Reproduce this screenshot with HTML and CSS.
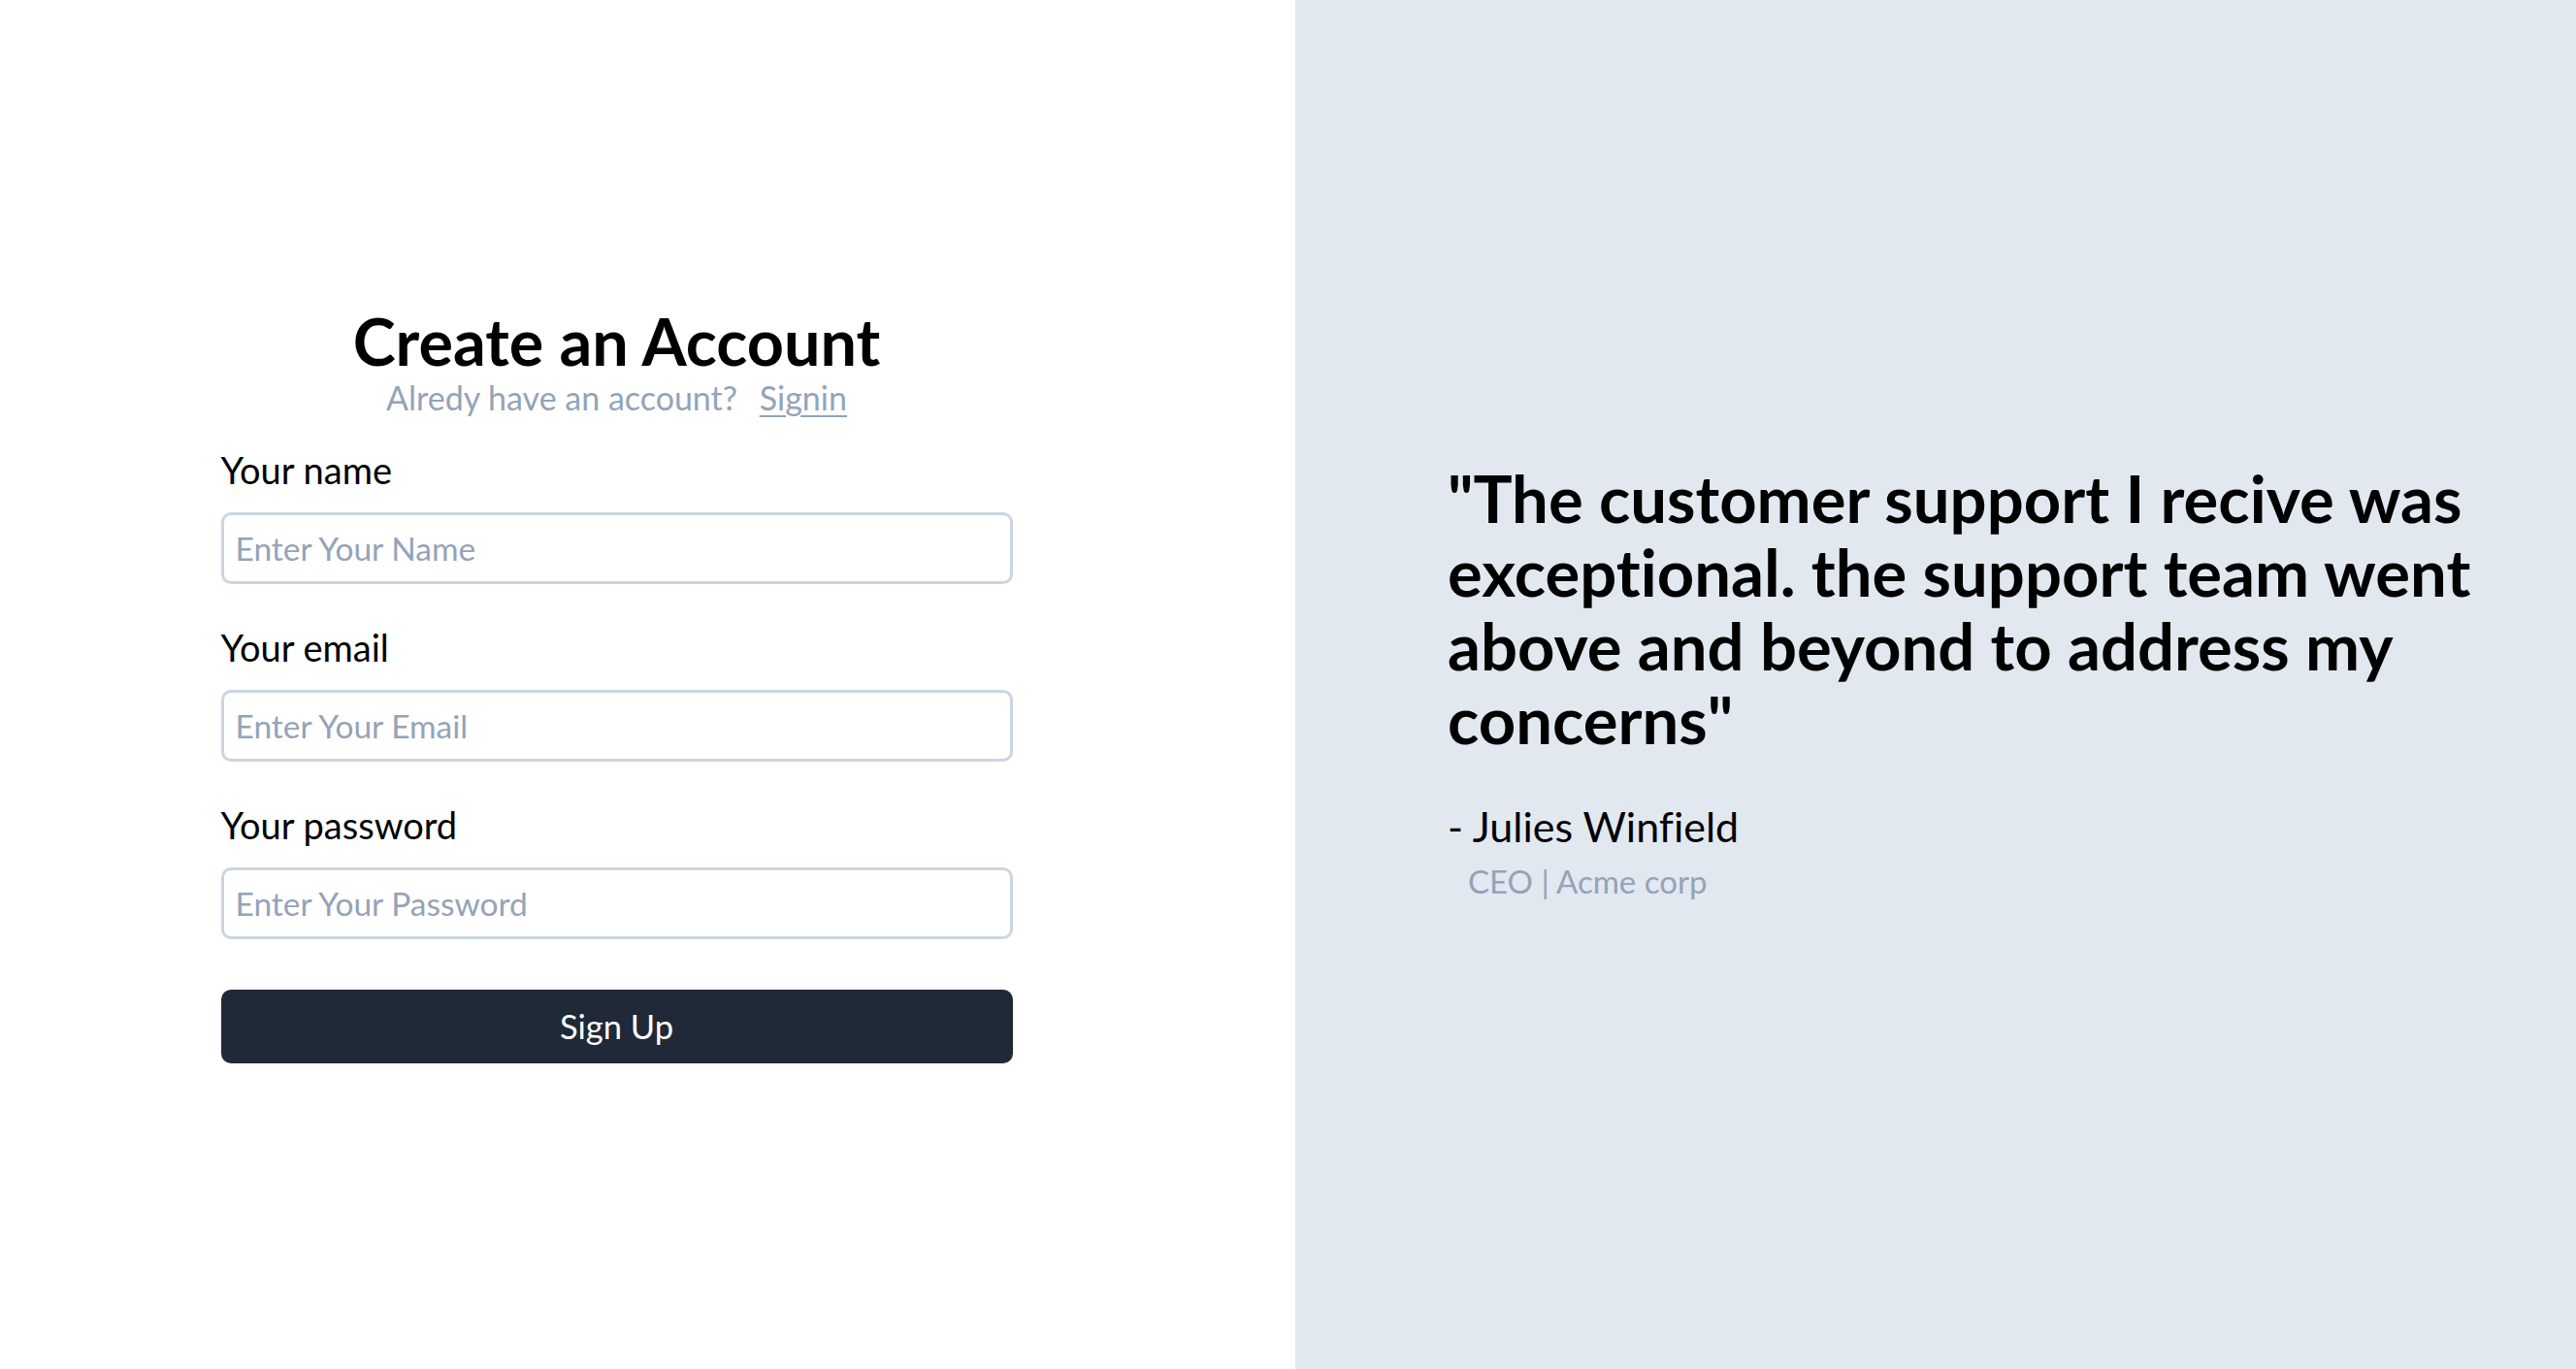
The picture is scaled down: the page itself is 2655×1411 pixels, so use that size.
FILE: index.html
```html
<!DOCTYPE html>
<html lang="en">
<head>
<meta charset="utf-8">
<title>Create an Account</title>
<link rel="stylesheet" href="styles.css">
</head>
<body>
<main class="page">
  <section class="left">
    <form class="form">
      <h1 class="title">Create an Account</h1>
      <p class="subtitle">Alredy have an account? <a href="#" class="signin">Signin</a></p>
      <label class="label" for="name">Your name</label>
      <input class="input" id="name" type="text" placeholder="Enter Your Name">
      <label class="label gap" for="email">Your email</label>
      <input class="input" id="email" type="email" placeholder="Enter Your Email">
      <label class="label gap" for="password">Your password</label>
      <input class="input" id="password" type="password" placeholder="Enter Your Password">
      <button class="btn" type="button">Sign Up</button>
    </form>
  </section>
  <section class="right">
    <div class="testimonial">
      <blockquote class="quote">"The customer support I recive was<br>exceptional. the support team went<br>above and beyond to address my<br>concerns"</blockquote>
      <p class="author">- Julies Winfield</p>
      <p class="role">CEO | Acme corp</p>
    </div>
  </section>
</main>
</body>
</html>
```
FILE: styles.css
```css
html, body {
  margin: 0;
  padding: 0;
}
body {
  font-family: "Lato", "Open Sans", sans-serif;
  font-variant-ligatures: none;
  color: #000;
  background: #fff;
}
.page {
  display: flex;
  height: 1411px;
}
.left {
  width: 1335px;
  flex: none;
  display: flex;
  align-items: center;
  justify-content: center;
  padding: 0 64px 3px 0;
  box-sizing: border-box;
  background: #fff;
}
.form {
  width: 816px;
  display: flex;
  flex-direction: column;
}
.title {
  margin: 0;
  font-size: 66.5px;
  line-height: 76px;
  font-weight: 700;
  text-align: center;
}
.subtitle {
  margin: 0 0 28px;
  font-size: 34px;
  line-height: 42px;
  color: #94a3b8;
  text-align: center;
}
.signin {
  margin-left: 14px;
  color: #94a3b8;
  text-decoration: underline;
  text-decoration-thickness: 2px;
  text-underline-offset: 5px;
}
.label {
  font-size: 38px;
  line-height: 50px;
  margin-bottom: 19px;
}
.label.gap {
  margin-top: 40px;
}
.input {
  box-sizing: border-box;
  width: 100%;
  height: 74px;
  border: 3px solid #cbd5e1;
  border-radius: 10px;
  padding: 0 12px;
  font-family: "Lato", "Open Sans", sans-serif;
  font-variant-ligatures: none;
  font-size: 33.5px;
  color: #000;
  background: #fff;
  outline: none;
}
.input::placeholder {
  color: #94a3b8;
  opacity: 1;
}
.btn {
  margin-top: 52px;
  width: 100%;
  height: 76px;
  border: none;
  border-radius: 10px;
  background: #1f2937;
  color: #fff;
  font-family: "Lato", "Open Sans", sans-serif;
  font-size: 34.5px;
  cursor: pointer;
}
.right {
  flex: 1;
  background: #e2e8f0;
  display: flex;
  align-items: center;
  padding: 0 60px 6px 157px;
  box-sizing: border-box;
}
.testimonial {
  display: flex;
  flex-direction: column;
}
.quote {
  margin: 0 0 45px;
  font-size: 67px;
  line-height: 76px;
  font-weight: 700;
  white-space: nowrap;
}
.author {
  margin: 0 0 6px;
  font-size: 43px;
  line-height: 56px;
}
.role {
  margin: 0;
  padding-left: 21px;
  font-size: 33px;
  line-height: 44px;
  color: #94a3b8;
}
```
